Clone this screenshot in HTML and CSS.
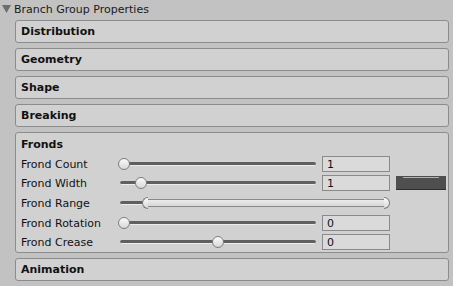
FILE: index.html
```html
<!DOCTYPE html>
<html lang="en">
<head>
    <meta charset="UTF-8">
    <title>Branch Group Properties</title>
    <link rel="stylesheet" href="styles.css">
</head>
<body>
    <div class="inspector">
        <div class="foldout">
            <svg class="arrow" width="9" height="8" viewBox="0 0 9 8"><polygon points="0,0 9,0 4.5,8" fill="#6e6e6e"/></svg>
            <span>Branch Group Properties</span>
        </div>

        <div class="groups">
            <div class="group"><div class="group-title">Distribution</div></div>
            <div class="group"><div class="group-title">Geometry</div></div>
            <div class="group"><div class="group-title">Shape</div></div>
            <div class="group"><div class="group-title">Breaking</div></div>

            <div class="group open">
                <div class="group-title">Fronds</div>

                <div class="row">
                    <span class="label">Frond Count</span>
                    <div class="slider"><span class="track"></span><span class="thumb" style="left: 0px"></span></div>
                    <div class="field">1</div>
                </div>

                <div class="row">
                    <span class="label">Frond Width</span>
                    <div class="slider"><span class="track"></span><span class="thumb" style="left: 17px"></span></div>
                    <div class="field">1</div>
                    <div class="swatch"><span class="swatch-line"></span></div>
                </div>

                <div class="row">
                    <span class="label">Frond Range</span>
                    <div class="range">
                        <span class="track"></span>
                        <span class="fill" style="left: 29px; right: 2px"></span>
                        <span class="half left-half" style="left: 24px"></span>
                        <span class="half right-half" style="right: 0px"></span>
                    </div>
                </div>

                <div class="row">
                    <span class="label">Frond Rotation</span>
                    <div class="slider"><span class="track"></span><span class="thumb" style="left: 0px"></span></div>
                    <div class="field">0</div>
                </div>

                <div class="row">
                    <span class="label">Frond Crease</span>
                    <div class="slider"><span class="track"></span><span class="thumb" style="left: 94px"></span></div>
                    <div class="field">0</div>
                </div>
            </div>

            <div class="group"><div class="group-title">Animation</div></div>
        </div>
    </div>
</body>
</html>
```

FILE: styles.css
```css
/* Inspector look */
body {
    margin: 0;
    padding: 0;
    background-color: #c2c2c2;
    font-family: "DejaVu Sans", "Liberation Sans", sans-serif;
    font-size: 11px;
    color: #111;
}

.inspector {
    width: 453px;
    height: 286px;
    overflow: hidden;
}

/* Top foldout header */
.foldout {
    display: flex;
    align-items: center;
    height: 18px;
    padding-left: 2px;
    color: #1a1a1a;
}

.foldout .arrow {
    margin-right: 3px;
}

/* Group boxes */
.groups {
    display: flex;
    flex-direction: column;
    gap: 5px;
    margin: 2px 4px 0 15px;
}

.group {
    background-color: #d1d1d1;
    border: 1px solid #8c8c8c;
    border-radius: 3px;
    min-height: 21px;
}

.group-title {
    height: 21px;
    line-height: 22px;
    padding-left: 5px;
    font-weight: bold;
}

.group.open .group-title {
    line-height: 23px;
}

/* Property rows */
.row {
    display: flex;
    align-items: center;
    height: 19.6px;
    padding-left: 5px;
}

.row:first-of-type {
    margin-top: 0;
}

.label {
    width: 97px;
    flex: none;
    padding-top: 1px;
}

.slider {
    position: relative;
    width: 200px;
    height: 12px;
    flex: none;
}

.track {
    position: absolute;
    left: 2px;
    right: 2px;
    top: 4px;
    height: 3px;
    background-color: #5f5f5f;
    border-radius: 2px;
    border-bottom: 1px solid #ececec;
}

.thumb {
    position: absolute;
    top: 0;
    width: 10px;
    height: 10px;
    border-radius: 50%;
    background: linear-gradient(#fafafa, #d8d8d8);
    border: 1px solid #7d7d7d;
}

.field {
    flex: none;
    width: 62px;
    height: 14px;
    line-height: 15px;
    margin-left: 4px;
    padding-left: 4px;
    background-color: #dadada;
    border: 1px solid #8a8a8a;
    color: #111;
}

.swatch {
    position: relative;
    flex: none;
    width: 50px;
    height: 13px;
    margin-left: 6px;
    background-color: #4f4f4f;
    border-bottom: 1px solid #2e2e2e;
}

.swatch-line {
    position: absolute;
    left: 7px;
    right: 7px;
    top: 1px;
    height: 1px;
    background-color: #8fe01a;
}

/* Min-max range slider */
.range {
    position: relative;
    width: 272px;
    height: 12px;
    flex: none;
}

.range .fill {
    position: absolute;
    top: 2px;
    height: 6px;
    background: linear-gradient(#ececec, #d6d6d6);
    border: 1px solid #8a8a8a;
    border-left: none;
    border-right: none;
}

.half {
    position: absolute;
    top: 0;
    width: 5px;
    height: 10px;
    background: linear-gradient(#fafafa, #d8d8d8);
    border: 1px solid #7d7d7d;
}

.left-half {
    border-radius: 6px 0 0 6px;
    border-right: none;
}

.right-half {
    border-radius: 0 6px 6px 0;
    border-left: none;
}
```
